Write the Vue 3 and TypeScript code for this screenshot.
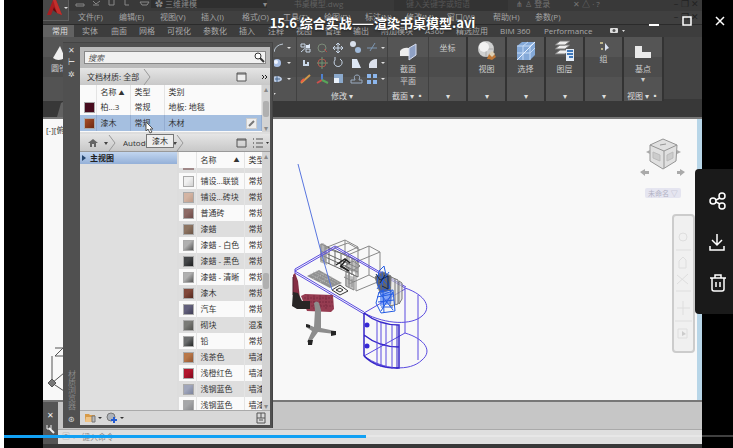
<script setup lang="ts">
import { computed, ref } from 'vue'

interface Material { name: string; type: string; color: string; dark: string }

const menus: string[] = ['文件(F)', '编辑(E)', '视图(V)', '插入(I)', '格式(O)', '工具(T)', '绘图(D)', '标注(N)', '修改(M)', '窗口(W)', '帮助(H)', '参数(P)']
const tabs: string[] = ['常用', '实体', '曲面', '网格', '可视化', '参数化', '插入', '注释', '视图', '管理', '输出', '附加模块', 'A360', '精选应用', 'BIM 360', 'Performance']

const library: Material[] = [
  { name: '铺设...联锁', type: '常规', color: '#f0f0f0', dark: '#d2d2d2' },
  { name: '铺设...砖块', type: '常规', color: '#d3b4a3', dark: '#bd9a88' },
  { name: '普通砖', type: '常规', color: '#8d6a65', dark: '#6c4a48' },
  { name: '漆蜡', type: '常规', color: '#8d7462', dark: '#6c5547' },
  { name: '漆蜡 - 白色', type: '常规', color: '#b0b0b0', dark: '#555555' },
  { name: '漆蜡 - 黑色', type: '常规', color: '#444648', dark: '#1c1d1f' },
  { name: '漆蜡 - 清晰', type: '常规', color: '#b0b0b0', dark: '#555555' },
  { name: '漆木', type: '常规', color: '#81483a', dark: '#54281e' },
  { name: '汽车', type: '常规', color: '#62607c', dark: '#3f3d55' },
  { name: '砌块', type: '混凝土', color: '#7a7b77', dark: '#50514e' },
  { name: '铅', type: '常规', color: '#6b6d6e', dark: '#232525' },
  { name: '浅茶色', type: '墙漆', color: '#b87849', dark: '#935430' },
  { name: '浅橙红色', type: '墙漆', color: '#b3162d', dark: '#82091f' },
  { name: '浅钢蓝色', type: '墙漆', color: '#a0a6bb', dark: '#7c849d' },
  { name: '浅钢蓝色', type: '墙漆', color: '#a6a7a9', dark: '#86878a' },
]

const position = ref<number>(362)
const duration = 729
const played = computed<string>(() => `${(position.value / duration) * 100}%`)
const query = ref<string>('')
</script>

<template>
  <main class="player">
    <div class="frame">
      <header class="caption-bar">
        <span class="tools">
          <svg width="80" height="8" viewBox="0 0 80 8" aria-hidden="true">
            <path d="M3 4h8v2H3zM20 1l3 3 4-3M20 5h6M36 0v5h5V0M52 0v5h4M67 2h9l-2 3h-5z" fill="none" stroke="#888" />
          </svg>
        </span>
        <span class="workspace"><span>✿ 三维建模</span><i>▾</i></span>
        <span class="document">书桌模型.dwg</span>
        <span class="keyword">键入关键字或短语</span>
        <span class="signin">⋔ ♙ 登录</span>
        <span class="exchange">✕ △ · ?</span>
        <span class="mini">– ❐ ✕</span>
      </header>
      <button class="app-button" aria-label="A">
        <svg width="24" height="20" viewBox="0 0 24 20" aria-hidden="true">
          <path d="M3 15 9 0h3l6 15-5-2-4-3-2 5z" fill="#a81c20" />
          <path d="M9 0h3l6 15-5-2z" fill="#c22f2c" />
          <path d="m9 10 4 3-3-6z" fill="#5c0b0e" />
          <path d="M20 7h4l-2 2z" fill="#ddd" />
        </svg>
      </button>
      <nav class="menu">
        <a v-for="m in menus" :key="m" href="#">{{ m }}</a>
        <span class="mini">– ❐ ✕</span>
      </nav>
      <nav class="tabs">
        <a v-for="(t, i) in tabs" :key="t" href="#" :class="{ active: i === 0 }">{{ t }}</a>
        <svg width="17" height="6" viewBox="0 0 17 6" aria-hidden="true">
          <rect width="8" height="5" rx="1" fill="#ddd" /><circle cx="4" cy="2.5" r="1.5" fill="#555" /><path d="M12 2h3l-1.5 2z" fill="#ddd" />
        </svg>
      </nav>

      <section class="ribbon">
        <div class="panel solids">
          <svg class="cone" width="14" height="16" viewBox="0 0 14 16" aria-hidden="true"><path d="M9 1 2 13q5 4 12 0z" fill="#eee" /></svg>
          <span>圆锥体</span>
          <svg class="draw" width="22" height="60" viewBox="275 38 22 60" aria-hidden="true">
            <path d="M275 52q1-7 9-8" fill="none" stroke="#bcc8d4" />
            <circle cx="278" cy="63" r="4" fill="#a9bfe4" /><circle cx="277" cy="62" r="2" fill="#eef4ff" />
            <ellipse cx="278" cy="79" rx="5" ry="3" fill="#b9c9e2" /><path d="M276 79h5M278 76v6" stroke="#49698f" />
            <path d="M288 47h4l-2 2zM288 62h4l-2 2zM288 78h4l-2 2zM273 93h4l-2 2z" fill="#ddd" />
          </svg>
        </div>
        <div class="panel modify">
          <svg width="88" height="48" viewBox="298 40 88 48" aria-hidden="true">
            <g fill="none" stroke="#c9d7e8">
              <path d="m301 52 9-8M301 44h4v3h-4zM306 49h4v3h-4z" />
              <circle cx="322" cy="48" r="4" stroke="#7b8a78" /><path d="m324 49 3 3" stroke="#b64b48" />
              <path d="M338 43v10M333 48h10M336 45l2-2 2 2M336 51l2 2 2-2M335 46l-2 2 2 2M341 46l2 2-2 2" />
              <path d="M367 48h10M370 51l5-8" stroke="#7c96b2" />
              <path d="M304 60v5h4v-3" stroke-width="2" />
              <circle cx="322" cy="63" r="4" stroke="#b0574d" /><path d="M322 57v12M317 63h11" stroke="#719775" />
              <path d="M340 59a4 4 0 1 1-5 1v-3" />
              <path d="m301 83 9-8" stroke="#d39849" stroke-width="2" /><path d="m301 82 3-3" stroke="#f05d42" stroke-width="2" />
              <path d="M322 80v-6" stroke="#4f80ce" stroke-width="2" /><path d="m322 80-5 3" stroke="#cd504c" stroke-width="2" /><path d="m322 80 6 3" stroke="#58a65a" stroke-width="2" />
              <path d="M351 83h11v-3h-3q2-5-2-5t-2 5h-4z" stroke="#9aabc0" />
            </g>
            <circle cx="353" cy="44" r="3" fill="#d8e0ec" /><circle cx="358" cy="50" r="3" fill="#9fb9d9" />
            <path d="M306 45h4v3h-4zM352 59h5l4 9h-9z" fill="#dde7f5" /><path d="M369 68v-4q2-5 8-5v9z" fill="#dbe0eb" />
            <path d="M334 74h9v9h-9z" fill="#8ba9cc" /><path d="M334 78h5v5h-5z" fill="#eaf1fa" />
            <path d="M367 74h4v4h-4zM373 74h4v4h-4zM367 80h4v4h-4zM373 80h4v4h-4z" fill="#8cb6ec" />
            <path d="M381 47h4l-2 2zM381 62h4l-2 2zM381 78h4l-2 2z" fill="#ddd" />
          </svg>
          <span class="foot">修改 ▾</span>
        </div>
        <div class="panel section">
          <svg width="20" height="20" viewBox="0 0 20 20" aria-hidden="true"><path d="M2 9q3-4 9-3v8H2z" fill="#eee" /><path d="m11 6 7-4v11l-7 5z" fill="#8ea0c4" stroke="#d7def0" /></svg>
          <span>截面<br />平面</span><span class="foot">截面 ▾ ▪</span>
        </div>
        <div class="panel boxed"><span class="high">坐标</span><i class="foot">▾</i></div>
        <div class="panel boxed">
          <svg width="22" height="22" viewBox="0 0 22 22" aria-hidden="true"><circle cx="10" cy="9" r="8" fill="#cfd0d0" /><path d="M10 1v16M2 9h16" stroke="#aaa" /><circle cx="8" cy="7" r="5" fill="#f2f2f2" /><path d="m13 14 4-2 3 5-4 3q-2-1-5-1z" fill="#bd7737" /><path d="m13 14 3-3 3 3-3 3z" fill="#ddd0b6" /></svg>
          <span>视图</span><i class="foot">▾</i>
        </div>
        <div class="panel boxed">
          <svg width="22" height="22" viewBox="0 0 22 22" aria-hidden="true"><path d="m2 6 5-4h13v13l-5 5H2z" fill="#84a9d8" /><path d="M2 6h13v14M15 6l5-4M2 13h13l5-5M8 20V6l5-4" fill="none" stroke="#c4daf6" /><path d="M2 20 20 2" stroke="#eaf3ff" /></svg>
          <span>选择</span><i class="foot">▾</i>
        </div>
        <div class="panel boxed">
          <svg width="22" height="22" viewBox="0 0 22 22" aria-hidden="true"><g fill="#ededed" stroke="#777"><path d="m1 14 5-4h10l-5 4z" /><path d="m1 9 5-4h10l-5 4z" /><path d="m1 5 5-4h10l-5 4z" /></g><path d="M12 9h8v12h-8z" fill="#e3ecf7" /><path d="M13 11h6M13 14h6M15 17h4" stroke="#3e78bb" stroke-width="2" /></svg>
          <span>图层</span><i class="foot">▾</i>
        </div>
        <div class="panel boxed">
          <svg width="12" height="12" viewBox="0 0 12 12" aria-hidden="true"><path d="M2 2h3v2H2zM3 8h2v2H3z" fill="#bdb58c" /><path d="m7 3 4 5-2 1-2 2z" fill="#d9e2f2" /></svg>
          <span>组</span><i class="foot">▾</i>
        </div>
        <div class="panel base">
          <svg width="20" height="22" viewBox="0 0 20 22" aria-hidden="true"><path d="M2 6h7v6h9v6H2z" fill="#e9e9e9" /></svg>
          <span>基点</span><i class="dot">▾</i><span class="foot">视图 ▾ ▪</span>
        </div>
      </section>
      <div class="file-tabs"><span></span></div>

      <section class="canvas">
        <svg class="model" viewBox="43 118 659 282" preserveAspectRatio="xMinYMin meet" aria-label="书桌模型">
          <g fill="none" stroke="#555"><path d="M55 347h8l-8 8h8M52 355v24M52 382l12-10M52 382l12 8" /><path d="m48 382 4-4 4 4-4 4z" fill="#777" /></g>
          <text x="46" y="132" class="view-label">[-][俯视]</text>
          <!-- monitor, speakers and shelves -->
          <g fill="none" stroke="#888">
            <path d="m325 247 20-8 13 7-15 7zM345 239v16M358 246v16M348 254l21-9 11 6-24 10zM380 251v29l-24 10v-29M369 245v29l-20 9M349 255v28M380 280l-11-6M334 247l14-5 12 7" />
            <path d="m321 243 37 17v16l-37-17zM325 244v16M329 247v16M335 250v15M341 253v15M347 255v17M352 258v16M321 250l37 17M321 254l37 17" stroke="#666" />
            <path d="m345 265 8-5 7 5-8 5zM346 270l8 4v15l-8-4zM349 271v15M352 278v8M344 276l10 5" stroke="#777" />
          </g>
          <path d="m320 243 3-1 4 3v19l-7-3z" fill="#999" opacity=".7" />
          <path d="m345 273 9 3v13l-9-4zM350 259l8 4v10l-8-4z" fill="#999" opacity=".6" />
          <path d="m336 264 9-6 5 4M340 265l9 5M346 259l-5 6 5 3" fill="none" stroke="#222" stroke-width="1.5" />
          <!-- keyboard and mouse mat -->
          <path d="m307 275 12-6 23 13-12 5z" fill="#919191" /><path d="m310 273 23 12M313 271l23 12M316 270l23 12M313 278l12-6M320 281l12-5" stroke="#bbb" stroke-dasharray="1 1" />
          <path d="m332 289 8-5 8 6-8 4zM336 289l4-2 3 2-3 2z" fill="none" stroke="#333" />
          <path d="m298 163 22 84 12 42" fill="none" stroke="#5976df" />
          <!-- desk -->
          <g fill="none" stroke="#5a4be0">
            <path d="m295 270 40-23 70 40M295 270l69 41M295 268l40-23 71 41M295 272l69 41" />
            <path d="M295 268v4M405 287v45M418 294v65M364 312l41-24M364 355l41-23M405 287c21 7 27 20 17 28-10 9-35 9-58-3M405 332c20 6 28 18 17 27-12 12-39 10-58-4" />
          </g>
          <g fill="none" stroke="#3525c8">
            <path d="M364 312v43M364 312q15 12 35 12v43q-22 1-35-12M364 334q15 12 35 12" stroke-width="1.5" />
            <path d="M377 319v46M381 321v45M386 323v44M392 324v44" stroke="#5a4be0" />
            <path d="M397 324v44" />
          </g>
          <circle cx="367" cy="324" r="2.5" fill="#3629d5" /><circle cx="367" cy="345" r="2.5" fill="#3629d5" />
          <!-- lamp and handset -->
          <g fill="none" stroke="#777"><path d="m375 276 8-5 8 4-1 14-10 3z" fill="#666" /><path d="m391 276 7 3v24l-8 2zM395 278v25M399 280l3 2v16l-3 5z" fill="#ddd" fill-opacity=".6" /></g>
          <path d="m380 290 13 1-2 12-11 2z" fill="#4176f4" fill-opacity=".65" />
          <g fill="none" stroke="#245ce3"><path d="m379 270 5-5 2 9 4 13-9 3-4-8zM379 291l14-2 2 21-14 2-5-10zM378 273l12 14M389 271l-12 17M379 291l14 18M393 291l-12 19M382 294l10-4M381 306h12M382 270l2 42M377 296l16-3M378 301l16-2" /></g>
          <path d="m376 273 4 6 8-4v13l-6-3M380 282l5-8" fill="none" stroke="#102653" />
          <!-- chair -->
          <path d="m293 274 2-2 3 8 2 18-7-4z" fill="#862f45" /><path d="M293 276v18" stroke="#512030" />
          <path d="m301 295 4-2 28 1 1 14-3 3-24-1z" fill="#963c51" /><path d="M304 297h28M304 301h29M305 305h28M308 294v14M314 294v15M320 294v15M326 294v15" stroke="#7d2d42" stroke-dasharray="2 1" />
          <path d="m293 291 5 1 4 8h8v8h-13l-5-3z" fill="#292626" />
          <path d="M314 302q3-3 5 0l2 7v18l14 3v3l-17-2-8 11-3-1 5-11-6-4 1-3 7 3 1-17z" fill="#8d8d8d" />
          <path d="m306 323 4 1v3l-4-1zM331 330h5v4l-5 1zM308 339h5l-1 5h-4z" fill="#252525" />
          <!-- view cube -->
          <g stroke="#959595"><path d="m650 144 13-6 14 6-1 16-13 8-13-8z" fill="#e0e0e0" /><path d="m650 144 14 6 13-6M664 150v17" fill="none" /><path d="m653 151 7 3v6l-7-3zM667 154l6-3v6l-6 3z" fill="#ccc" stroke="#bbb" /><path d="m660 144 6-1" /></g>
          <path d="m646 151 4-2v4zM681 151l-4-2v4zM640 171l5-3v2h4v3h-4v2zM685 171l-5-3v2h-3v3h3v2z" fill="#aaa" />
          <rect x="645" y="187" width="36" height="10" rx="2" fill="#e5e5f0" /><text x="648" y="195" class="ucs-label">未命名 ▽</text>
          <!-- navigation bar -->
          <rect x="673" y="214" width="21" height="137" rx="3" fill="#f0f0f0" stroke="#ccc" stroke-width="2" />
          <g fill="none" stroke="#dedede"><circle cx="683" cy="236" r="4" /><path d="M676 249h15M679 260v7h7v-8l-3-3-4 4M677 274l11 9M688 273l-11 10M676 290h15M683 300v14M677 307h13M675 320h17M678 328h9v9h-9z" /></g>
          <path d="m682 330 4 3-4 2z" fill="#ccc" />
        </svg>
      </section>

      <footer class="command">
        <div class="grip"><span>✕</span><svg width="10" height="10" viewBox="0 0 10 10" aria-hidden="true"><path d="m8 9-5-5" stroke="#eee" stroke-width="2" /><path d="M1 1v4h4V1" fill="none" stroke="#eee" /></svg></div>
        <div class="history"></div>
        <label class="prompt"><span>▣ ▾</span><input aria-label="键入命令" placeholder="键入命令" /></label>
      </footer>
      <div class="status"></div>

      <aside class="palette">
        <div class="spine">
          <span>✕</span><span>⊢</span><span>✲</span>
          <strong>材质浏览器</strong><span>⊛</span>
        </div>
        <div class="browser">
          <div class="search">
            <input v-model="query" type="text" placeholder="搜索" aria-label="搜索" />
            <svg width="12" height="12" viewBox="0 0 12 12" aria-hidden="true"><circle cx="5" cy="5" r="3" fill="#fff" stroke="#333" /><path d="m7 7 4 4" stroke="#333" stroke-width="2" /></svg>
          </div>
          <div class="crumb">
            <span>文档材质: 全部</span>
            <svg class="chevron" width="8" height="16" viewBox="0 0 8 16" aria-hidden="true"><path d="m1 0 6 8-6 8" fill="none" stroke="#999" /></svg>
            <svg class="end" width="34" height="12" viewBox="0 0 34 12" aria-hidden="true"><path d="M1 2h9v8H1z" fill="#eee" stroke="#555" /><path d="M1 3h9" stroke="#555" /><path d="m26 4 2 2-2 2M29 4l2 2-2 2" fill="none" stroke="#222" /></svg>
          </div>
          <div class="scroller docs">
            <table>
              <thead><tr><th></th><th>名称 <i>▲</i></th><th>类型</th><th>类别</th></tr></thead>
              <tbody>
                <tr><td><i class="swatch maroon"></i></td><td>柏...3</td><td>常规</td><td>地板: 地毯</td></tr>
                <tr class="selected"><td><i class="swatch rust"></i></td><td>漆木</td><td>常规</td><td><span class="last">木材<button aria-label="编辑"><svg width="9" height="9" viewBox="0 0 9 9" aria-hidden="true"><path d="m2 7 5-5" stroke="#777" stroke-width="2" /></svg></button></span></td></tr>
              </tbody>
            </table>
            <div class="bar"><i>▴</i><b></b><i>▾</i></div>
          </div>
          <div class="crumb library-bar">
            <svg width="32" height="16" viewBox="0 0 32 16" aria-hidden="true"><path d="m1 8 5-4 5 4h-2v4H7V9H5v3H3V8z" fill="#666" /><path d="M17 7h4l-2 3z" fill="#444" /><path d="m22 0 6 8-6 8" fill="none" stroke="#999" /></svg>
            <span class="vendor">Autodesk</span>
            <svg class="crumb-end" width="12" height="16" viewBox="0 0 12 16" aria-hidden="true"><path d="M0 7h4l-2 3z" fill="#444" /><path d="m4 0 6 8-6 8" fill="none" stroke="#999" /></svg>
            <svg class="end" width="34" height="14" viewBox="0 0 34 14" aria-hidden="true"><path d="M1 3h9v8H1zM1 4h9M20 3h7M20 7h7M20 11h7" fill="none" stroke="#555" /><path d="M17 3h1M17 7h1M17 11h1" stroke="#333" /><path d="M30 6h3l-1.5 2z" fill="#333" /></svg>
            <span class="tip">漆木</span>
            <svg class="pointer" width="9" height="12" viewBox="0 0 9 12" aria-hidden="true"><path d="M1 0v9l2-2 2 4 2-1-2-3h3z" fill="#fff" stroke="#555" /></svg>
          </div>
          <div class="split">
            <div class="tree"><a href="#"><i></i>主视图</a></div>
            <div class="scroller list">
              <div class="rows">
                <table>
                  <thead><tr><th></th><th><span class="last">名称<i>▲</i></span></th><th>类型</th></tr></thead>
                  <tbody>
                    <tr class="cut"><td><i></i></td><td></td><td></td></tr>
                    <tr v-for="(m, i) in library" :key="i">
                      <td><i class="swatch" :style="{ background: `linear-gradient(135deg, ${m.color} 40%, ${m.dark})` }"></i></td><td>{{ m.name }}</td><td>{{ m.type }}</td>
                    </tr>
                  </tbody>
                </table>
              </div>
              <div class="bar"><i>▴</i><b></b><i>▾</i></div>
            </div>
          </div>
          <div class="tray">
            <svg width="42" height="12" viewBox="0 0 42 12" aria-hidden="true"><path d="M1 2h4l1 1h5v7H1z" fill="#d79a48" /><path d="M2 5h7v5H1z" fill="#efc487" /><path d="M8 4h3v6H8z" fill="#bbb" stroke="#777" /><path d="M14 5h4l-2 2zM36 5h4l-2 2z" fill="#333" /><circle cx="27" cy="5" r="4" fill="#aeb3ba" stroke="#777" /><path d="M30 5v6M27 8h6" stroke="#235bd1" stroke-width="2" /></svg>
            <svg width="10" height="12" viewBox="0 0 10 12" aria-hidden="true"><path d="M1 1h8v10H1zM1 6h8M5 1v5M3 8h4" fill="none" stroke="#555" /></svg>
          </div>
        </div>
      </aside>
    </div>

    <h1>15.6 综合实战——渲染书桌模型.avi</h1>
    <div class="window-controls">
      <button aria-label="最小化"><svg width="12" height="12" viewBox="0 0 12 12"><path d="M1 10h10" stroke="#fff" stroke-width="2" /></svg></button>
      <button aria-label="最大化"><svg width="12" height="12" viewBox="0 0 12 12"><path d="M2 2h8v8H2z" fill="none" stroke="#fff" stroke-width="1.5" /></svg></button>
      <button aria-label="关闭"><svg width="12" height="12" viewBox="0 0 12 12"><path d="m2 2 8 8M10 2l-8 8" stroke="#fff" stroke-width="1.5" /></svg></button>
    </div>
    <div class="actions">
      <button aria-label="分享"><svg width="18" height="18" viewBox="0 0 18 18"><g fill="none" stroke="#fff" stroke-width="1.5"><circle cx="4" cy="9" r="3" /><circle cx="13" cy="4" r="3" /><circle cx="13" cy="14" r="3" /><path d="m7 8 4-2M7 10l4 2" /></g></svg></button>
      <button aria-label="下载"><svg width="18" height="18" viewBox="0 0 18 18"><path d="M8 1v11M3 7l5 5 5-5M1 13v4h14v-4" fill="none" stroke="#fff" stroke-width="1.5" /></svg></button>
      <button aria-label="删除"><svg width="18" height="20" viewBox="0 0 18 20"><path d="M1 5h16M6 5V2h6v3M3 5v11q0 2 2 2h8q2 0 2-2V5M7 9v5M11 9v5" fill="none" stroke="#fff" stroke-width="1.5" /></svg></button>
    </div>
    <input v-model.number="position" class="progress" type="range" min="0" :max="duration" aria-label="播放进度" />
  </main>
</template>

<style>
body { background: #fff; }
</style>

<style scoped>
* { box-sizing: border-box; }
a { color: inherit; text-decoration: none; }
button { border: 0; padding: 0; background: none; display: grid; place-items: center; }
i { font-style: normal; }
svg { display: block; flex: none; }
.player { position: relative; margin-left: 4px; height: 100vh; padding: 0 31px 0 39px; background: #000; overflow: hidden; font-family: "Open Sans", "Noto Sans CJK SC", sans-serif; }
.frame { position: relative; height: 100%; display: flex; flex-direction: column; overflow: hidden; background: #4a4a4a; font-size: 8px; line-height: 12px; white-space: nowrap; }
.caption-bar { height: 11px; flex: none; display: grid; grid-template-columns: 78px 122px 121px 114px 57px 75px 1fr; padding-left: 30px; background: #393939; color: #747474; line-height: 8px; overflow: hidden; }
.workspace { display: flex; justify-content: space-between; margin-right: 6px; padding-left: 4px; height: 8px; background: #2f2f2f; color: #8b8b8b; }
.document { text-align: center; color: #606060; padding-right: 30px; }
.keyword { background: #333; color: #555; padding-left: 12px; }
.signin, .exchange { padding-left: 8px; }
.mini { color: #222; font-size: 9px; text-align: right; padding-right: 3px; }
.app-button { position: absolute; left: 0; top: 0; width: 26px; height: 21px; background: #484848; border: solid #606060; border-width: 0 1px 1px 0; }
.menu { height: 14px; flex: none; display: grid; grid-template-columns: repeat(9, 41px) 46px 42px 42px 1fr; padding-left: 35px; background: #404040; color: #a4a4a4; border-bottom: 1px solid #2b2b2b; }
.tabs { height: 12px; flex: none; display: grid; grid-template-columns: 39px 29px 28px 28px 36px 36px 29px 28px 29px 28px 28px 44px 31px 44px 44px 66px 1fr; align-items: center; background: #3d3d3d; color: #aaa; }
.tabs .active { width: 31px; padding-left: 9px; background: #626262; color: #ddd; }
.ribbon { height: 64px; flex: none; display: grid; grid-template-columns: 254px 91px 41px repeat(5, 39px) 40px 1fr; background: #434343; border-bottom: 2px solid #383838; color: #ccc; }
.panel { position: relative; display: flex; flex-direction: column; align-items: center; gap: 1px; padding: 3px 1px 13px; background: linear-gradient(#555 0 20px, #4c4c4c 20px 40px, #535353 40px); border-right: 1px solid #414141; }
.panel.boxed, .panel.base { border-right: 2px solid #333; }
.panel.section { padding-top: 5px; }
.panel .high { padding-top: 2px; }
.panel .foot { position: absolute; left: 0; right: 0; bottom: 0; text-align: center; line-height: 11px; color: #ddd; }
.panel .dot { line-height: 6px; }
.panel.solids { align-items: flex-start; padding: 8px 8px 12px; }
.draw { position: absolute; right: 0; top: 1px; }
.file-tabs { height: 18px; flex: none; background: #383838; border-bottom: 2px solid #777; }
.file-tabs span { display: block; width: 22px; height: 16px; background: #626262; clip-path: polygon(14px 100%, 18px 2px, 100% 0, 100% 100%); }
.canvas { flex: 1; min-height: 0; background: #f8f8f8; border-right: 5px solid #b8d6e8; overflow: hidden; }
.model { width: calc(100% + 5px); }
.view-label { font-size: 8px; fill: #333; }
.ucs-label { font-size: 7px; fill: #b2b2c4; }
.command { height: 44px; flex: none; display: grid; grid-template: 28px 14px / 15px 1fr; border-top: 2px solid #777; background: #c7c7c7; }
.grip { grid-row: span 2; display: flex; flex-direction: column; align-items: center; gap: 3px; padding-top: 7px; color: #eee; background: #555; }
.history { background: #c6c6c6; border-bottom: 1px solid #aaa; }
.prompt { display: flex; gap: 6px; padding-left: 4px; background: #dfdfdf; color: #999; }
.prompt input { border: 0; background: none; padding: 0; font: inherit; color: #777; min-width: 0; flex: 1; }
.prompt input::placeholder { color: #888; }
.status { height: 4px; flex: none; background: #383838; }

.palette { position: absolute; left: 20px; top: 42px; bottom: 20px; width: 210px; display: flex; padding: 4px 2px 3px 0; background: #505050; border: solid #444; border-width: 1px 1px 0 0; color: #333; }
.spine { width: 17px; flex: none; display: flex; flex-direction: column; align-items: center; color: #ddd; margin-top: -3px; }
.spine strong { margin-top: auto; writing-mode: vertical-rl; font-weight: 400; color: #888; font-size: 8px; padding-bottom: 3px; }
.browser { flex: 1; min-width: 0; display: flex; flex-direction: column; background: #ddd; }
.search { height: 21px; flex: none; padding: 4px; position: relative; background: #bbb; }
.search input { display: block; width: 100%; height: 13px; border: 1px solid #888; border-radius: 0; padding: 0 3px; font: italic 8px "Noto Sans CJK SC", sans-serif; background: #f1f1f1; }
.search input::placeholder { color: #555; }
.search svg { position: absolute; right: 5px; top: 4px; }
.crumb { position: relative; height: 17px; flex: none; display: flex; align-items: center; gap: 4px; padding: 0 0 0 7px; background: linear-gradient(#e5e5e5, #c8c8c8); }
.crumb .end { margin-left: auto; }
.scroller { display: flex; background: #fafafa; }
.docs { height: 47px; flex: none; margin-bottom: 2px; }
table { border-collapse: collapse; table-layout: fixed; flex: 1; width: 100%; align-self: flex-start; }
th, td { height: 16px; padding: 0 0 0 4px; font-weight: 400; text-align: left; line-height: 12px; overflow: hidden; border-right: 1px solid #e4e4e4; }
.docs th { height: 14px; }
.docs th:nth-child(1) { width: 16px; }
.docs th:nth-child(2) { width: 34px; }
.docs th:nth-child(3) { width: 34px; }
.docs th i, .list th i { font-size: 6px; }
.swatch { display: block; width: 11px; height: 11px; border: 1px solid #aaa; }
.maroon { background: #470b1d; }
.rust { background: linear-gradient(135deg, #a84e28, #6e2a13); }
.selected td { background: #a5bfe0; border-color: #93acd0; }
.last { display: flex; justify-content: space-between; align-items: center; padding-right: 4px; }
.last button { background: #eee; border: 1px solid #ccc; }
.bar { width: 8px; flex: none; display: flex; flex-direction: column; justify-content: space-between; align-items: center; line-height: 8px; background: #d3d3d3; color: #888; overflow: hidden; }
.bar b { width: 6px; height: 16px; background: #b0b0b0; border-radius: 2px; }
.vendor { width: 26px; overflow: hidden; }
.crumb-end { margin-left: 20px; }
.tip { position: absolute; z-index: 1; left: 66px; top: 0; width: 28px; height: 14px; text-align: center; background: #eee; border: 1px solid #777; }
.pointer { position: absolute; z-index: 2; left: 65px; top: -12px; }
.split { flex: 1; min-height: 0; display: flex; border-top: 1px solid #999; }
.tree { width: 97px; flex: none; background: #dfdfdf; }
.tree a { display: flex; align-items: center; gap: 4px; height: 12px; padding-left: 2px; background: linear-gradient(#c2d6f0, #94b0d8); color: #222; font-weight: 600; }
.tree i { width: 4px; height: 6px; background: #24456e; clip-path: polygon(0 0, 100% 50%, 0 100%); }
.list { flex: 1; min-width: 0; margin-left: 2px; }
.rows { flex: 1; min-width: 0; overflow: hidden; }
.list th:nth-child(1) { width: 17px; }
.list th:nth-child(2) { width: 48px; }
.list tbody tr:nth-child(odd) td { background: #dedede; }
.list tbody .cut td { height: 5px; background: #fafafa; vertical-align: top; line-height: 1px; }
.cut i { display: block; width: 11px; height: 2px; background: #a08888; }
.list td:nth-child(3), .list th:nth-child(3) { border-right: 0; }
.tray { height: 15px; flex: none; display: flex; align-items: center; justify-content: space-between; padding: 0 4px; border-top: 1px solid #aaa; background: #d8d8d8; }

h1 { position: absolute; left: 0; right: 0; top: 14px; margin: 0; padding-left: 8px; text-align: center; font-family: "Noto Sans CJK SC", sans-serif; font-size: 13px; line-height: 18px; font-weight: 700; color: #fff; text-shadow: 0 1px 2px #222; white-space: nowrap; }
.window-controls { position: absolute; right: 7px; top: 15px; display: flex; gap: 21px; }
.actions { position: absolute; right: 0; top: 169px; width: 38px; height: 145px; padding: 23px 0 21px 7px; display: flex; flex-direction: column; justify-content: space-between; align-items: center; background: #1a1a1a; border-radius: 4px 0 0 4px; }
.progress { position: absolute; left: 0; bottom: 10px; width: 100%; height: 4px; margin: 0; appearance: none; background: linear-gradient(#12a1f4, #12a1f4) left / v-bind(played) 3px no-repeat, linear-gradient(#ffffff40, #ffffff40) left / 100% 2px no-repeat; }
.progress::-webkit-slider-thumb { appearance: none; width: 0; height: 0; }
</style>
